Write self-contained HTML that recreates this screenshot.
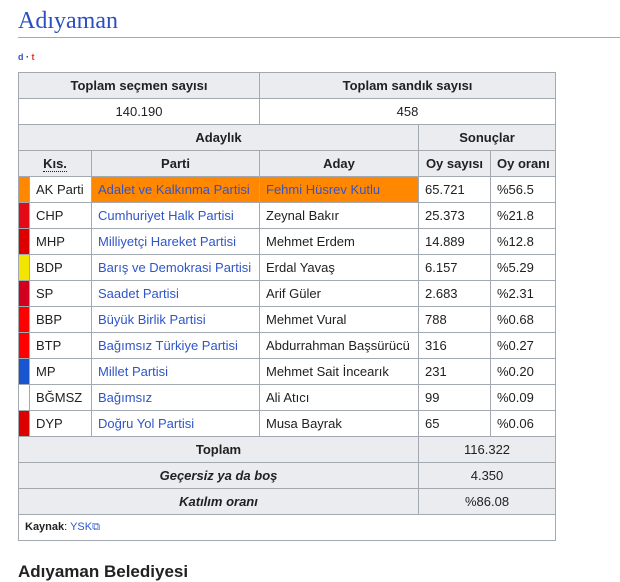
<!DOCTYPE html>
<html><head><meta charset="utf-8"><style>
body{margin:0;background:#fff;font-family:"Liberation Sans",Arial,sans-serif;color:#202122;}
h2{position:absolute;left:18px;top:6px;margin:0;font-family:"Liberation Serif",serif;font-weight:normal;font-size:24px;color:#2a4fc0;width:602px;border-bottom:1px solid #a2a9b1;height:31px;line-height:30px;}
.dt{position:absolute;left:18px;top:52px;font-size:9px;font-weight:bold;}
table{position:absolute;left:18px;top:72px;border-collapse:collapse;table-layout:fixed;width:537px;font-size:13px;}
td,th{border:1px solid #a2a9b1;height:25px;padding:0 6px;white-space:nowrap;overflow:hidden;}
th{background:#eaecf0;font-weight:bold;text-align:center;}
.c{text-align:center;}
a{color:#2f55c8;text-decoration:none;}
.b{padding:0;}
.o{background:#ff8800;}
.g{background:#eaecf0;text-align:center;}
.k{font-size:11px;height:25px;}
.bot{position:absolute;left:18px;top:562px;font-weight:bold;font-size:17px;}
</style></head><body>
<h2>Adıyaman</h2>
<div class="dt"><span style="color:#2f55c8">d</span> · <span style="color:#d33">t</span></div>
<table>
<colgroup><col style="width:11px"><col style="width:62px"><col style="width:168px"><col style="width:159px"><col style="width:72px"><col style="width:65px"></colgroup>
<tr><th colspan="3">Toplam seçmen sayısı</th><th colspan="3">Toplam sandık sayısı</th></tr>
<tr><td colspan="3" class="c">140.190</td><td colspan="3" class="c">458</td></tr>
<tr><th colspan="4">Adaylık</th><th colspan="2">Sonuçlar</th></tr>
<tr><th colspan="2"><span style="border-bottom:1px dotted #202122">Kıs.</span></th><th>Parti</th><th>Aday</th><th>Oy sayısı</th><th>Oy oranı</th></tr>
<tr><td class="b o"></td><td>AK Parti</td><td class="o"><a>Adalet ve Kalkınma Partisi</a></td><td class="o"><a>Fehmi Hüsrev Kutlu</a></td><td>65.721</td><td>%56.5</td></tr>
<tr><td class="b" style="background:#e30a17"></td><td>CHP</td><td><a>Cumhuriyet Halk Partisi</a></td><td>Zeynal Bakır</td><td>25.373</td><td>%21.8</td></tr>
<tr><td class="b" style="background:#d00"></td><td>MHP</td><td><a>Milliyetçi Hareket Partisi</a></td><td>Mehmet Erdem</td><td>14.889</td><td>%12.8</td></tr>
<tr><td class="b" style="background:#f2e600"></td><td>BDP</td><td><a>Barış ve Demokrasi Partisi</a></td><td>Erdal Yavaş</td><td>6.157</td><td>%5.29</td></tr>
<tr><td class="b" style="background:#d1001f"></td><td>SP</td><td><a>Saadet Partisi</a></td><td>Arif Güler</td><td>2.683</td><td>%2.31</td></tr>
<tr><td class="b" style="background:#f00"></td><td>BBP</td><td><a>Büyük Birlik Partisi</a></td><td>Mehmet Vural</td><td>788</td><td>%0.68</td></tr>
<tr><td class="b" style="background:#f00"></td><td>BTP</td><td><a>Bağımsız Türkiye Partisi</a></td><td>Abdurrahman Başsürücü</td><td>316</td><td>%0.27</td></tr>
<tr><td class="b" style="background:#1a55d0"></td><td>MP</td><td><a>Millet Partisi</a></td><td>Mehmet Sait İncearık</td><td>231</td><td>%0.20</td></tr>
<tr><td class="b" style="background:#fff"></td><td>BĞMSZ</td><td><a>Bağımsız</a></td><td>Ali Atıcı</td><td>99</td><td>%0.09</td></tr>
<tr><td class="b" style="background:#d00"></td><td>DYP</td><td><a>Doğru Yol Partisi</a></td><td>Musa Bayrak</td><td>65</td><td>%0.06</td></tr>
<tr><th colspan="4">Toplam</th><td colspan="2" class="g">116.322</td></tr>
<tr><th colspan="4"><i>Geçersiz ya da boş</i></th><td colspan="2" class="g">4.350</td></tr>
<tr><th colspan="4"><i>Katılım oranı</i></th><td colspan="2" class="g">%86.08</td></tr>
<tr><td colspan="6" class="k"><b>Kaynak</b>: <a>YSK⧉</a></td></tr>
</table>
<div class="bot">Adıyaman Belediyesi</div>
</body></html>
